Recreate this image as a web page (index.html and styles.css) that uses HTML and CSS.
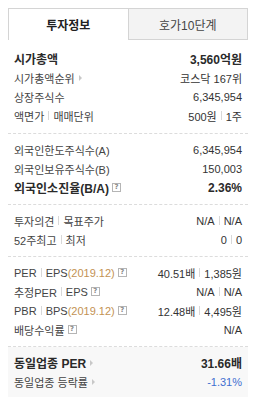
FILE: index.html
```html
<!DOCTYPE html>
<html lang="ko">
<head>
<meta charset="utf-8">
<link rel="stylesheet" href="styles.css">
</head>
<body>
<div class="panel">
  <div class="tabs">
    <div class="tab active">투자정보</div>
    <div class="tab">호가10단계</div>
  </div>
  <div class="section first">
    <div class="row strong"><span class="lbl">시가총액</span><span class="val">3,560억원</span></div>
    <div class="row"><span class="lbl">시가총액순위<i class="arrow"></i></span><span class="val">코스닥 167위</span></div>
    <div class="row"><span class="lbl">상장주식수</span><span class="val">6,345,954</span></div>
    <div class="row"><span class="lbl">액면가<i class="sep"></i>매매단위</span><span class="val">500원<i class="sep"></i>1주</span></div>
  </div>
  <div class="section">
    <div class="row"><span class="lbl">외국인한도주식수(A)</span><span class="val">6,345,954</span></div>
    <div class="row"><span class="lbl">외국인보유주식수(B)</span><span class="val">150,003</span></div>
    <div class="row strong"><span class="lbl">외국인소진율(B/A)<i class="help">?</i></span><span class="val">2.36%</span></div>
  </div>
  <div class="section">
    <div class="row"><span class="lbl">투자의견<i class="sep"></i>목표주가</span><span class="val">N/A<i class="sep"></i>N/A</span></div>
    <div class="row"><span class="lbl">52주최고<i class="sep"></i>최저</span><span class="val">0<i class="sep"></i>0</span></div>
  </div>
  <div class="section">
    <div class="row"><span class="lbl">PER<i class="sep"></i>EPS<em class="date">(2019.12)</em><i class="help">?</i></span><span class="val">40.51배<i class="sep"></i>1,385원</span></div>
    <div class="row"><span class="lbl">추정PER<i class="sep"></i>EPS<i class="help">?</i></span><span class="val">N/A<i class="sep"></i>N/A</span></div>
    <div class="row"><span class="lbl">PBR<i class="sep"></i>BPS <em class="date">(2019.12)</em><i class="help">?</i></span><span class="val">12.48배<i class="sep"></i>4,495원</span></div>
    <div class="row"><span class="lbl">배당수익률<i class="help">?</i></span><span class="val">N/A</span></div>
  </div>
  <div class="section gray">
    <div class="row strong"><span class="lbl">동일업종 PER<i class="arrow"></i></span><span class="val">31.66배</span></div>
    <div class="row"><span class="lbl">동일업종 등락률<i class="arrow"></i></span><span class="val down">-1.31%</span></div>
  </div>
</div>
</body>
</html>
```
FILE: styles.css
```css
html, body { margin: 0; padding: 0; background: #fff; }
body {
  padding: 8px;
  font-family: "Liberation Sans", "Noto Sans CJK KR", sans-serif;
  font-size: 11px;
  color: #444;
}
.panel { width: 240px; }
.tabs { display: flex; height: 32px; }
.tab {
  flex: 1;
  display: flex;
  align-items: center;
  justify-content: center;
  font-size: 12px;
  color: #444;
  background: #f3f3f3;
  border: 1px solid #d4d4d4;
  box-sizing: border-box;
}
.tab.active {
  background: #fff;
  border-bottom: none;
  border-right: none;
  font-weight: bold;
  color: #222;
}
.section {
  padding: 6px 6px 7px;
  border-bottom: 1px dashed #dcdcdc;
}
.section.first { padding-top: 9px; padding-bottom: 8px; }
.section.gray { background: #f8f8f8; border-bottom: none; padding-bottom: 6px; }
.row {
  height: 19px;
  display: flex;
  align-items: center;
  justify-content: space-between;
  white-space: nowrap;
}
.lbl { display: flex; align-items: center; color: #444; }
.val { display: flex; align-items: center; color: #333; }
.row.strong { font-size: 12px; font-weight: bold; }
.row.strong .lbl, .row.strong .val { color: #2a2a2a; }
.sep {
  display: inline-block;
  width: 1px;
  height: 9px;
  background: #d8d8d8;
  margin: 0 4px;
}
.arrow {
  display: inline-block;
  width: 0;
  height: 0;
  border-left: 3px solid #c8c8c8;
  border-top: 3px solid transparent;
  border-bottom: 3px solid transparent;
  margin-left: 4px;
}
.help {
  display: inline-flex;
  align-items: center;
  justify-content: center;
  width: 7px;
  height: 7px;
  border: 1px solid #b5b5b5;
  font-style: normal;
  font-weight: bold;
  font-size: 7px;
  line-height: 7px;
  color: #888;
  margin-left: 3px;
  font-family: "DejaVu Sans", sans-serif;
}
.date {
  font-style: normal;
  color: #c39253;
  font-family: "Liberation Sans", sans-serif;
  font-size: 11px;
}
.down { color: #3f6fd0; }
```
